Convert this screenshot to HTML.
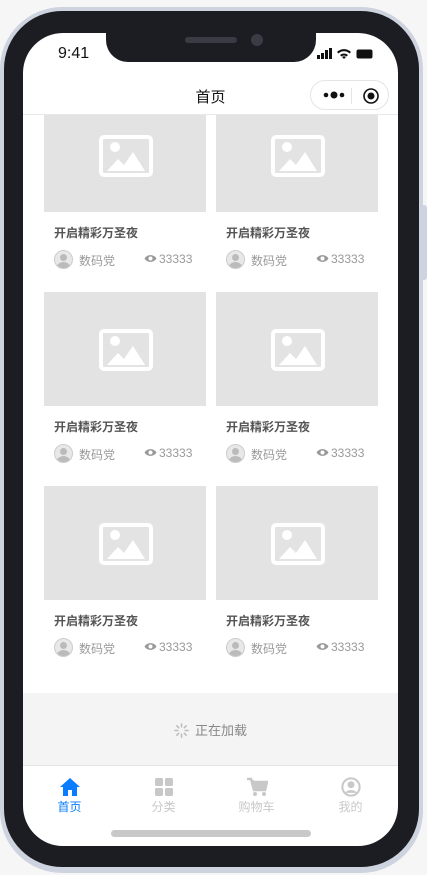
<!DOCTYPE html>
<html><head><meta charset="utf-8"><style>
*{margin:0;padding:0;box-sizing:border-box}
body{width:427px;height:875px;background:#f6f6f6;position:relative;overflow:hidden;font-family:"Liberation Sans","Noto Sans CJK SC",sans-serif}
.frame{position:absolute;left:0;top:7px;width:423px;height:866px;border-radius:62px;background:#cdd3df}
.bezel{position:absolute;left:4px;top:11px;width:415px;height:856px;border-radius:58px;background:#1c1d22}
.btn{position:absolute;left:422px;top:205px;width:5px;height:75px;background:#cdd3df;border-radius:0 3px 3px 0}
.screen{position:absolute;left:23px;top:33px;width:375px;height:813px;border-radius:40px;background:#fff;overflow:hidden}
.notch{position:absolute;left:83px;top:-2px;width:210px;height:31px;background:#1c1d22;border-radius:0 0 22px 22px}
.spk{position:absolute;left:79px;top:6px;width:52px;height:6px;border-radius:3px;background:#3a3c45}
.cam{position:absolute;left:145px;top:3px;width:12px;height:12px;border-radius:6px;background:#3a3c45}
.time{position:absolute;left:35px;top:12px;font-size:16px;color:#111}
.nav{position:absolute;left:0;top:47px;width:375px;height:35px;border-bottom:1px solid #e8e8e8;background:#fff;z-index:3}
.nav .t{position:absolute;left:0;width:375px;text-align:center;top:6px;font-size:15px;color:#111}
.cap{position:absolute;left:287px;top:0;width:79px;height:30px;border:1px solid #e4e4e4;border-radius:15px}
.card{position:absolute;width:162px}
.img{height:114px;background:#e3e3e3;position:relative}
.img svg{position:absolute;left:55px;top:37px}
.tt{font-size:12px;font-weight:bold;color:#555;margin:12px 0 0 10px}
.meta{position:relative;height:24px;margin-top:8px;font-size:12px;color:#999}
.av{position:absolute;left:10px;top:1px;width:19px;height:19px;border-radius:50%;border:1.5px solid #ccc;background:#e8e8e8;overflow:hidden}
.av:before{content:"";position:absolute;left:5px;top:3px;width:7px;height:7px;border-radius:50%;background:#bbb}
.av:after{content:"";position:absolute;left:2px;top:11px;width:13px;height:10px;border-radius:50%;background:#bbb}
.nm{position:absolute;left:35px;top:3px}
.vw{position:absolute;left:100px;top:3px}
.load{position:absolute;left:0;top:660px;width:375px;height:73px;background:#f4f4f4;border-bottom:1px solid #e4e4e4;font-size:13px;color:#888;text-align:center;line-height:76px}
.tab{position:absolute;top:733px;width:93px;text-align:center;font-size:12px;color:#c8c8c8}
.tab svg{display:block;margin:11px auto 1px}
.home{position:absolute;left:88px;top:797px;width:200px;height:7px;border-radius:4px;background:#c8c8c8}
</style></head><body>
<div class="frame"></div><div class="bezel"></div><div class="btn"></div>
<div class="screen">
<div class="time">9:41</div>
<svg style="position:absolute;left:294px;top:15px" width="56" height="12" viewBox="0 0 56 12"><rect x="0" y="7" width="3" height="4" fill="#111"/><rect x="4" y="5" width="3" height="6" fill="#111"/><rect x="8" y="2" width="3" height="9" fill="#111"/><rect x="12" y="0" width="3" height="11" fill="#111"/><path d="M20 4a10 10 0 0 1 14 0l-1.5 1.5a8 8 0 0 0-11 0zM23 7a6 6 0 0 1 8 0l-1.5 1.5a4 4 0 0 0-5 0zM27 11l-2-2a3 3 0 0 1 4 0z" fill="#111"/><rect x="39.5" y="1.5" width="16" height="9" rx="2" fill="#111"/></svg>
<div class="notch"><div class="spk"></div><div class="cam"></div></div>
<div class="nav"><div class="t">首页</div>
<div class="cap"><svg style="position:absolute;left:12px;top:9px" width="22" height="10"><circle cx="3" cy="5" r="2.3" fill="#111"/><circle cx="11" cy="5" r="3.5" fill="#111"/><circle cx="19" cy="5" r="2.3" fill="#111"/></svg><div style="position:absolute;left:40px;top:7px;width:1px;height:16px;background:#e4e4e4"></div><svg style="position:absolute;left:51px;top:6px" width="18" height="18"><circle cx="9" cy="9" r="7" fill="none" stroke="#111" stroke-width="1.6"/><circle cx="9" cy="9" r="3.5" fill="#111"/></svg></div>
</div>
<div id="g"></div>
<div class="load"><svg style="vertical-align:middle;margin-right:6px;margin-top:-3px" width="15" height="15" viewBox="0 0 16 16" stroke="#bbb" stroke-width="1.6" stroke-linecap="round"><path d="M8 1v3M8 12v3M1 8h3M12 8h3M3 3l2 2M11 11l2 2M3 13l2-2M11 5l2-2"/></svg>正在加载</div>
<div class="tab" style="left:0;color:#0a7cff"><svg width="22" height="20" viewBox="0 0 22 20"><path d="M11 1L1 10h3v9h5v-6h4v6h5v-9h3z" fill="#0a7cff"/></svg>首页</div>
<div class="tab" style="left:94px"><svg width="20" height="20" viewBox="0 0 20 20" fill="#c8c8c8"><rect x="1" y="1" width="8" height="8" rx="1.5"/><rect x="11" y="1" width="8" height="8" rx="1.5"/><rect x="1" y="11" width="8" height="8" rx="1.5"/><rect x="11" y="11" width="8" height="8" rx="1.5"/></svg>分类</div>
<div class="tab" style="left:187px"><svg width="22" height="20" viewBox="0 0 22 20" fill="#c8c8c8"><path d="M1 2h4l3 11h11l2-8H7l-.5-2" stroke="#c8c8c8" stroke-width="2.5" fill="none"/><path d="M7 5h14l-2 8H9z"/><circle cx="9" cy="17" r="2"/><circle cx="18" cy="17" r="2"/></svg>购物车</div>
<div class="tab" style="left:281px"><svg width="22" height="20" viewBox="0 0 22 22"><circle cx="11" cy="11" r="9.5" fill="none" stroke="#c8c8c8" stroke-width="2.2"/><circle cx="11" cy="8.5" r="3.8" fill="#c8c8c8"/><path d="M4.5 17.5a7.5 6 0 0 1 13 0" fill="#c8c8c8"/></svg>我的</div>
<div class="home"></div>
</div>
<script>
var h='',tops=[65,259,453];
var ic='<svg width="54" height="42" viewBox="0 0 54 42"><rect x="2" y="2" width="50" height="38" rx="3" fill="none" stroke="#fff" stroke-width="4"/><circle cx="16" cy="12" r="5" fill="#fff"/><path d="M8 36L19 24 25 30 34 17 46 36z" fill="#fff"/></svg>';
tops.forEach(function(t){[21,193].forEach(function(l){h+='<div class="card" style="left:'+l+'px;top:'+t+'px"><div class="img">'+ic+'</div><div class="tt">开启精彩万圣夜</div><div class="meta"><div class="av"></div><span class="nm">数码党</span><span class="vw"><svg width="13" height="9" viewBox="0 0 13 9" style="margin-right:2px"><path d="M0.5 4.5C3 0 10 0 12.5 4.5 10 9 3 9 0.5 4.5z" fill="#999"/><circle cx="6.5" cy="4.5" r="2" fill="#fff"/></svg>33333</span></div></div>';});});
document.getElementById('g').innerHTML=h;
</script>
</body></html>
